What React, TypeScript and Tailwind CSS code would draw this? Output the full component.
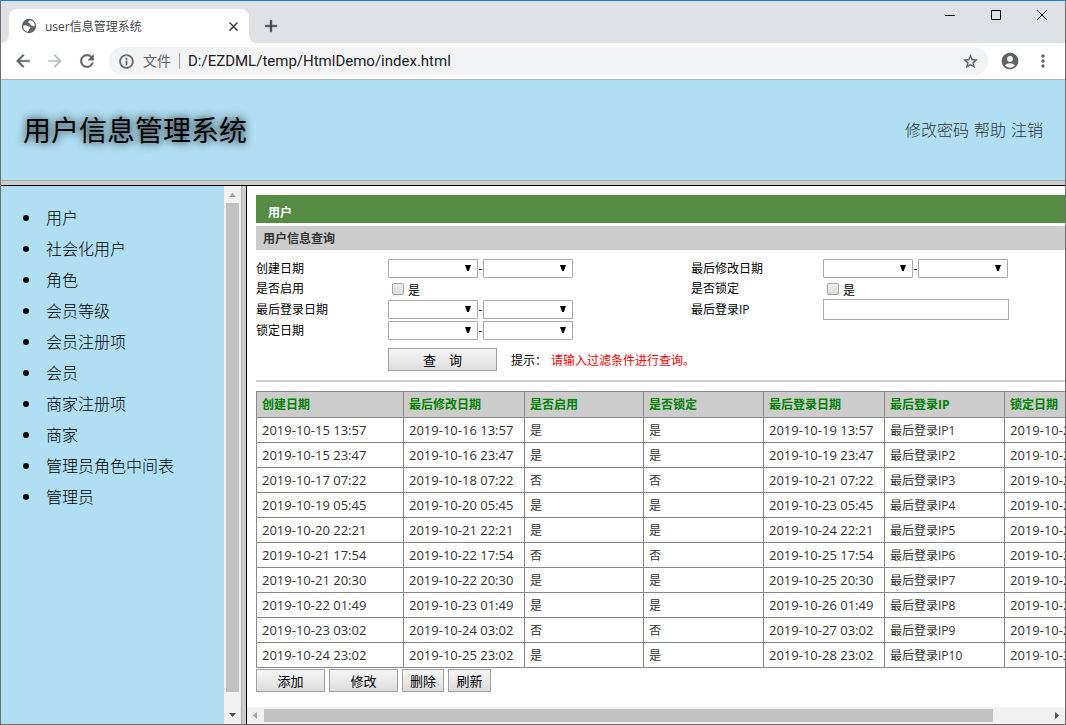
import classNames from 'clsx';
import React, { ReactNode } from 'react';
import {
  MdAccountCircle,
  MdAdd,
  MdArrowBack,
  MdArrowForward,
  MdClose,
  MdInfoOutline,
  MdMoreVert,
  MdRefresh,
  MdStarBorder,
} from 'react-icons/md';

const menu = [
  '用户',
  '社会化用户',
  '角色',
  '会员等级',
  '会员注册项',
  '会员',
  '商家注册项',
  '商家',
  '管理员角色中间表',
  '管理员',
];

const columns = [
  { title: '创建日期', width: 'w-[147px]' },
  { title: '最后修改日期', width: 'w-[121px]' },
  { title: '是否启用', width: 'w-[119px]' },
  { title: '是否锁定', width: 'w-[120px]' },
  { title: '最后登录日期', width: 'w-[121px]' },
  { title: '最后登录IP', width: 'w-[120px]' },
  { title: '锁定日期', width: 'w-[121px]' },
];

// created, modified, enabled, locked, last login, ip, locked at
const rows = [
  ['2019-10-15 13:57', '2019-10-16 13:57', '是', '是', '2019-10-19 13:57', '最后登录IP1', '2019-10-20 13:57'],
  ['2019-10-15 23:47', '2019-10-16 23:47', '是', '是', '2019-10-19 23:47', '最后登录IP2', '2019-10-20 23:47'],
  ['2019-10-17 07:22', '2019-10-18 07:22', '否', '否', '2019-10-21 07:22', '最后登录IP3', '2019-10-22 07:22'],
  ['2019-10-19 05:45', '2019-10-20 05:45', '是', '是', '2019-10-23 05:45', '最后登录IP4', '2019-10-24 05:45'],
  ['2019-10-20 22:21', '2019-10-21 22:21', '是', '是', '2019-10-24 22:21', '最后登录IP5', '2019-10-25 22:21'],
  ['2019-10-21 17:54', '2019-10-22 17:54', '否', '否', '2019-10-25 17:54', '最后登录IP6', '2019-10-26 17:54'],
  ['2019-10-21 20:30', '2019-10-22 20:30', '是', '是', '2019-10-25 20:30', '最后登录IP7', '2019-10-26 20:30'],
  ['2019-10-22 01:49', '2019-10-23 01:49', '是', '是', '2019-10-26 01:49', '最后登录IP8', '2019-10-27 01:49'],
  ['2019-10-23 03:02', '2019-10-24 03:02', '否', '否', '2019-10-27 03:02', '最后登录IP9', '2019-10-28 03:02'],
  ['2019-10-24 23:02', '2019-10-25 23:02', '是', '是', '2019-10-28 23:02', '最后登录IP10', '2019-10-30 23:02'],
];

// slightly heavier material icons; their invisible bounding path stays unstroked
const bold = 'stroke-[0.5px] [&>[fill=none]]:stroke-none';

const DateSelect = ({ label }: { label: string }) => (
  <span className="relative flex">
    <select
      aria-label={label}
      className="h-[19px] w-[90px] appearance-none rounded-[1px] border border-[#a9a9a9] bg-white"
    >
      <option></option>
    </select>
    <svg
      viewBox="0 0 8 7"
      className="pointer-events-none absolute top-[6px] right-[6px] h-[7px] w-2"
    >
      <path d="M1 0h6L4.800 6H3.200z" fill="#000" />
    </svg>
  </span>
);

const DateRange = ({ label }: { label: string }) => (
  <div className="flex items-center">
    <DateSelect label={`${label} 从`} />
    <span className="w-[5px] text-center">-</span>
    <DateSelect label={`${label} 到`} />
  </div>
);

const Check = () => (
  <label className="flex items-center gap-1 pl-1">
    <input
      type="checkbox"
      className="size-3 appearance-none rounded-[2px] border border-[#a5a5a5] bg-linear-to-b from-[#eee] to-[#dcdcdc] shadow-xs"
    />
    <span className="pt-1 leading-4">是</span>
  </label>
);

type ButtonProps = { className?: string; children: ReactNode };

const Button = ({ className, children }: ButtonProps) => (
  <button
    type="button"
    className={classNames(
      'h-[23px] border border-[#a0a0a0] bg-linear-to-b from-[#f6f6f6] to-[#dddddd] text-[13px] leading-5 whitespace-pre text-black',
      className
    )}
  >
    {children}
  </button>
);

const Arrow = ({ d, fill }: { d: string; fill: string }) => (
  <svg viewBox="0 0 17 17" className="size-[17px] shrink-0">
    <path d={d} fill={fill} />
  </svg>
);

const Globe = () => (
  <svg viewBox="0 0 16 16" className="size-4">
    <circle cx="8" cy="8" r="7.200" fill="#5f6368" />
    <path
      d="M2.200 7.800C3.600 7 5.400 7 6.600 7.900c1.100.8 2.500.3 2.700 1.600.2 1.100-1 1.300-1.400 2.100-.4.900-.3 1.900-1.300 2.300A6 6 0 0 1 2.200 7.800z"
      fill="#fff"
    />
    <path
      d="M9.200 2.200c-.9.700-2 .9-2 1.800 0 1.100 1.400.8 1.800 1.600.4.900.6 1.800 1.700 1.800 1 0 1.500.900 3.100.8A6 6 0 0 0 9.200 2.200z"
      fill="#fff"
    />
  </svg>
);

const TitleBar = () => (
  <div className="flex h-[42px] items-end bg-[#dee1e6]">
    <svg viewBox="0 0 8 8" className="size-2 shrink-0">
      <path d="M8 0v8H0a8 8 0 0 0 8-8z" fill="#fff" />
    </svg>
    <div className="flex h-[34px] w-60 items-center rounded-t-lg bg-white pr-2 pl-3">
      <Globe />
      <span className="flex-1 pt-[2px] pl-2 text-xs text-[#45494d]">
        user信息管理系统
      </span>
      <button type="button" aria-label="关闭标签页">
        <MdClose className={classNames('size-[15px] text-[#3c4043]', bold)} />
      </button>
    </div>
    <svg viewBox="0 0 8 8" className="size-2 shrink-0">
      <path d="M0 0v8h8a8 8 0 0 1-8-8z" fill="#fff" />
    </svg>
    <button type="button" aria-label="新标签页" className="mb-[7px] ml-1">
      <MdAdd className={classNames('size-5 text-[#3c4043]', bold)} />
    </button>
    <div className="ml-auto flex gap-[34px] self-start pt-2 pr-[17px]">
      <button type="button" aria-label="最小化">
        <svg viewBox="0 0 12 12" className="size-3">
          <path d="M1 6.500h10" stroke="#000" />
        </svg>
      </button>
      <button type="button" aria-label="最大化">
        <svg viewBox="0 0 12 12" className="size-3" fill="none">
          <path d="M1.500 1.500h9v9h-9z" stroke="#000" />
        </svg>
      </button>
      <button type="button" aria-label="关闭">
        <svg viewBox="0 0 12 12" className="size-3">
          <path d="M1 1l10 10M11 1L1 11" stroke="#000" />
        </svg>
      </button>
    </div>
  </div>
);

const Toolbar = () => (
  <div className="flex h-[37px] items-center border-b border-[#b0b0b0] bg-white pr-3 pl-3 text-[#5f6368]">
    <div className="flex gap-3">
      <button type="button" aria-label="后退">
        <MdArrowBack className={classNames('size-5', bold)} />
      </button>
      <button type="button" aria-label="前进">
        <MdArrowForward className={classNames('size-5 text-[#bdbfc1]', bold)} />
      </button>
      <button type="button" aria-label="刷新页面">
        <MdRefresh className={classNames('size-5', bold)} />
      </button>
    </div>
    <div className="ml-3 flex h-7 flex-1 items-center rounded-full bg-[#f1f3f4] pr-[9px] pl-[9px]">
      <MdInfoOutline className={classNames('size-[17px]', bold)} />
      <span className="pl-2 text-sm">文件</span>
      <span className="ml-2 h-4 w-px bg-[#9aa0a6]" />
      <input
        aria-label="地址"
        defaultValue="D:/EZDML/temp/HtmlDemo/index.html"
        className="min-w-0 flex-1 bg-transparent pl-2 font-['Roboto',sans-serif] text-[15px] text-[#202124]"
      />
      <MdStarBorder className={classNames('size-[17px]', bold)} />
    </div>
    <MdAccountCircle className="ml-3 size-5" />
    <MdMoreVert className="ml-[13px] size-5" />
  </div>
);

const Sidebar = () => (
  <aside className="flex shrink-0 bg-[#b0dff3]">
    <ul className="w-[223px] pt-4 pl-[22px] text-base font-light text-black">
      {menu.map((item) => (
        <li key={item} className="flex h-[31px] items-center gap-[17px]">
          <span className="size-[6px] rounded-full bg-black" />
          <a href="#">{item}</a>
        </li>
      ))}
    </ul>
    <div className="flex w-[17px] flex-col bg-[#f1f1f1]">
      <Arrow d="M5 11h7L8.500 7z" fill="#a3a3a3" />
      <div className="mx-[2px] mb-[15px] flex-1 bg-[#c1c1c1]" />
      <Arrow d="M5 6h7l-3.500 4z" fill="#505050" />
    </div>
    <div className="w-[6px] border-r border-l border-r-black border-l-[#aaa] bg-[#ccc]" />
  </aside>
);

const QueryForm = () => (
  <form className="pt-2">
    <div className="grid grid-cols-[132px_303px_132px_186px] grid-rows-[21px_20px_21px_21px] items-center">
      <span>创建日期</span>
      <DateRange label="创建日期" />
      <span>最后修改日期</span>
      <DateRange label="最后修改日期" />
      <span>是否启用</span>
      <Check />
      <span>是否锁定</span>
      <Check />
      <span>最后登录日期</span>
      <DateRange label="最后登录日期" />
      <label htmlFor="ip">最后登录IP</label>
      <input id="ip" className="h-[21px] w-full border border-[#a9a9a9]" />
      <span>锁定日期</span>
      <DateRange label="锁定日期" />
    </div>
    <div className="mt-[7px] flex items-center pl-[132px]">
      <Button className="w-[109px]">查　询</Button>
      <span className="ml-[14px] pt-[2px]">提示：</span>
      <span className="ml-1 pt-[2px] text-[#f00]">
        请输入过滤条件进行查询。
      </span>
    </div>
  </form>
);

const UserTable = () => (
  <table className="w-[870px] table-fixed border-collapse">
    <thead>
      <tr className="h-[26px] bg-[#ccc] text-left text-[#008000]">
        {columns.map(({ title, width }) => (
          <th key={title} className={classNames('border border-[#888] px-[5px]', width)}>
            {title}
          </th>
        ))}
      </tr>
    </thead>
    <tbody>
      {rows.map((row) => (
        <tr key={row[0]} className="h-[25px] text-[#333]">
          {row.map((cell, i) => (
            <td
              key={i}
              className={classNames(
                'border border-[#888] px-[5px] leading-4 whitespace-nowrap',
                cell.startsWith('2019') ? 'text-[13px]' : 'pt-[2px]'
              )}
            >
              {cell}
            </td>
          ))}
        </tr>
      ))}
    </tbody>
  </table>
);

const Main = () => (
  <main className="flex min-w-0 flex-1 flex-col bg-white text-xs text-black">
    <div className="flex-1 overflow-hidden pt-[9px] pl-[9px]">
      <h2 className="h-7 bg-[#568b44] pt-[10px] pl-3 font-bold text-white">
        用户
      </h2>
      <h3 className="mt-[3px] h-6 bg-[#ccc] pt-px pl-[7px] leading-6 font-bold text-[#333]">
        用户信息查询
      </h3>
      <QueryForm />
      <hr className="mt-[9px] mb-[9px] border-t-2 border-[#ccc]" />
      <UserTable />
      <div className="mt-px flex gap-1">
        <Button className="w-[69px]">添加</Button>
        <Button className="w-[69px]">修改</Button>
        <Button className="w-[42px]">删除</Button>
        <Button className="w-[43px]">刷新</Button>
      </div>
    </div>
    <div className="flex h-[17px] bg-[#f1f1f1]">
      <Arrow d="M10 5v7L6 8.500z" fill="#a3a3a3" />
      <div className="my-[2px] mr-[55px] flex-1 bg-[#c1c1c1]" />
      <Arrow d="M7 5v7l4-3.500z" fill="#505050" />
    </div>
  </main>
);

export default function App() {
  return (
    <div className="flex h-screen flex-col border border-[#6e6e6e] border-t-[#1a7fd6] font-['Open_Sans','Noto_Sans_CJK_SC',sans-serif]">
      <TitleBar />
      <Toolbar />
      <header className="flex h-[100px] shrink-0 items-center justify-between bg-[#b0dff3] px-[22px]">
        <h1 className="text-[28px] font-normal text-black [text-shadow:0_0_10px_#000]">
          用户信息管理系统
        </h1>
        <nav className="flex gap-[5px] text-base font-light text-[#333]">
          <a href="#">修改密码</a>
          <a href="#">帮助</a>
          <a href="#">注销</a>
        </nav>
      </header>
      <div className="h-[6px] shrink-0 border-t border-b border-t-[#aaa] border-b-black bg-[#ccc]" />
      <div className="flex min-h-0 flex-1">
        <Sidebar />
        <Main />
      </div>
    </div>
  );
}
